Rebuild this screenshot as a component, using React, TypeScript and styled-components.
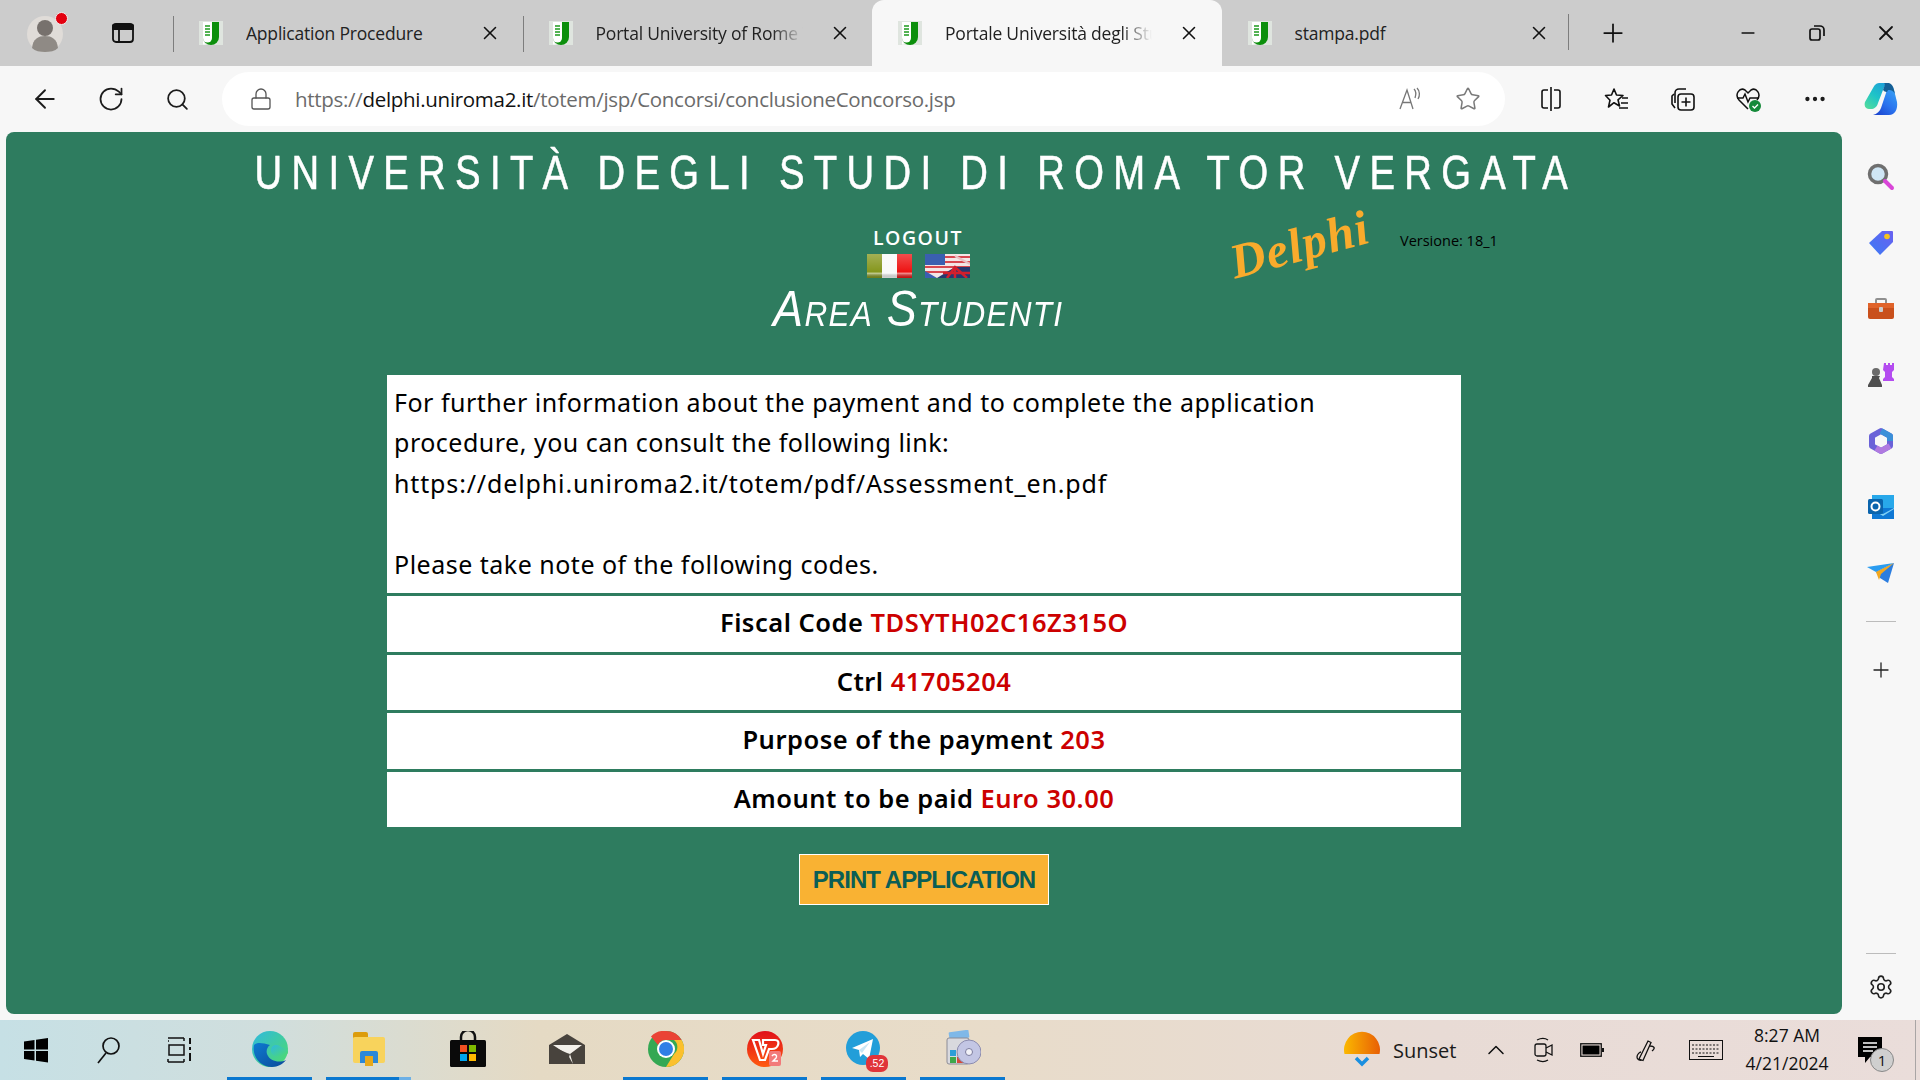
import React from 'react';
import styled, { createGlobalStyle } from 'styled-components';
import { ArrowLeft, ChevronUp, Lock, Minus, MoreHorizontal, Plus, RotateCw, Search, Settings, Star, X } from 'lucide-react';

const Global = createGlobalStyle`
  html, body { margin: 0; padding: 0; width: 1920px; height: 1080px; overflow: hidden; background: #f7f7f7; }
  #root { width: 1920px; height: 1080px; }
  * { box-sizing: border-box; }
`;

const uiFont = `"Open Sans", "Noto Sans", sans-serif`;

const Page = styled.div`
  width: 1920px; height: 1080px; display: flex; flex-direction: column; background: #f7f7f7; font-family: ${uiFont}; color: #1a1a1a; overflow: hidden;
`;

/* ---------- tab strip ---------- */
const TabStrip = styled.div`
  height: 66px; background: #cccccc; display: flex; align-items: stretch; flex: none;
`;
const StripStart = styled.div`
  width: 173px; display: flex; align-items: center; padding-left: 26px; gap: 43px; flex: none;
`;
const Avatar = styled.div`
  position: relative; width: 42px; height: 42px; flex: none; display: flex;
  &::after { content: ''; position: absolute; right: 0; top: 0; width: 11px; height: 11px; border-radius: 50%; background: #e3000f; border: 1px solid #eee; }
`;
const Tab = styled.div<{ $active?: boolean; $divider?: boolean }>`
  width: 349.5px; flex: none; display: flex; align-items: center; padding-left: 25px; position: relative;
  background: ${p => (p.$active ? '#f7f7f7' : 'transparent')};
  border-radius: ${p => (p.$active ? '12px 12px 0 0' : '0')};
  &::before {
    content: ''; display: ${p => (p.$divider ? 'block' : 'none')}; position: absolute; left: 0; top: 16px; bottom: 14px; width: 1px; background: #7d7d7d;
  }
`;
const TabTitle = styled.div<{ $fade?: boolean }>`
  margin-left: 22px; width: 207px; white-space: nowrap; overflow: hidden; font-size: 17.5px; line-height: 24px; color: #222; letter-spacing: -0.2px;
  ${p => (p.$fade ? 'mask-image: linear-gradient(to right, #000 85%, transparent 100%);' : '')}
`;
const TabClose = styled.div`
  margin-left: 25px; width: 24px; height: 24px; display: flex; align-items: center; justify-content: center; color: #111; flex: none;
`;
const StripEnd = styled.div`
  flex: 1; display: flex; align-items: center; position: relative;
`;
const EndDivider = styled.div`
  width: 1px; height: 36px; background: #7d7d7d; margin-left: -3px; margin-top: -2px;
`;
const NewTab = styled.div`
  margin-left: 28px; width: 32px; height: 32px; display: flex; align-items: center; justify-content: center; color: #111;
`;
const WindowButtons = styled.div`
  margin-left: auto; display: flex; width: 207px; height: 100%;
`;
const WindowButton = styled.div`
  width: 69px; display: flex; align-items: center; justify-content: center; color: #111;
`;

/* ---------- toolbar ---------- */
const Toolbar = styled.div`
  height: 66px; display: flex; align-items: center; padding-left: 12px; flex: none; background: #f7f7f7;
`;
const ToolSlot = styled.div`
  width: 66px; height: 54px; display: flex; align-items: center; justify-content: center; color: #1c1c1c; flex: none;
`;
const AddressBar = styled.div`
  width: 1283px; height: 54px; margin: 0 13px 0 12px; background: #fff; border-radius: 27px; display: flex; align-items: center; padding-left: 27px; flex: none;
`;
const Url = styled.div`
  margin-left: 22px; font-size: 20.5px; letter-spacing: -0.3px; color: #6b6b6b; white-space: nowrap;
  b { font-weight: 400; color: #111; }
`;
const AddressTools = styled.div`
  margin-left: auto; display: flex; align-items: center; padding-right: 8px; color: #7a7a7a;
`;
const AddressTool = styled.div`
  width: 58px; display: flex; align-items: center; justify-content: center;
`;

/* ---------- middle ---------- */
const Middle = styled.div`
  flex: 1; display: flex; min-height: 0;
`;
const Panel = styled.main`
  margin-left: 6px; width: 1836px; height: 882px; background: #2e7c5f; border-radius: 8px; display: flex; flex-direction: column; align-items: center; flex: none;
`;
const UniTitle = styled.h1`
  margin: 16px 16px 0 0; height: 48px; flex: none; font-family: "Liberation Sans", sans-serif; font-weight: 400; font-size: 49px; line-height: 48px; letter-spacing: 12px; color: #fff; -webkit-text-stroke: 0.6px #fff; white-space: nowrap; transform: scaleX(0.78);
`;
const HeaderGrid = styled.div`
  width: 100%; display: grid; grid-template-columns: 612px 600px 1fr; height: 179px; flex: none;
`;
const HeaderCenter = styled.div`
  grid-column: 2; display: flex; flex-direction: column; align-items: center;
`;
const Logout = styled.div`
  margin-top: 29px; font-family: "Open Sans", sans-serif; font-size: 19.5px; font-weight: 600; line-height: 26px; letter-spacing: 1.5px; color: #fff;
`;
const Flags = styled.div`
  margin-top: 3px; display: flex; gap: 13px; height: 24px;
`;
const AreaTitle = styled.div`
  margin-top: 6px; font-family: "Liberation Sans", sans-serif; font-style: italic; font-variant: small-caps; font-size: 50px; line-height: 50px; letter-spacing: 1.4px; color: #fff; white-space: nowrap; transform: scaleX(0.9);
`;
const HeaderSide = styled.div`
  grid-column: 3; display: flex; align-items: flex-start; padding: 20px 0 0 10px;
`;
const DelphiMark = styled.div`
  font-family: "Liberation Serif", serif; font-style: italic; font-weight: 700; font-size: 49px; line-height: 50px; color: #f9ab2c; transform: rotate(-15deg); width: 172px; flex: none; text-align: left; letter-spacing: 1px;
`;
const Version = styled.div`
  font-family: "Open Sans", sans-serif; font-size: 14.5px; line-height: 20px; color: #000; margin-top: 15px; white-space: nowrap;
`;

const InfoStack = styled.section`
  width: 1074px; display: flex; flex-direction: column; gap: 3px; flex: none;
`;
const InfoCard = styled.div`
  background: #fff; padding: 7px 7px 9px; font-family: "Noto Sans", sans-serif; font-size: 25px; line-height: 40.4px; letter-spacing: 0.5px; color: #000;
`;
const LinkLine = styled.span`
  letter-spacing: 0.86px;
`;
const CodeRow = styled.div`
  background: #fff; height: 55.5px; line-height: 53px; text-align: center; font-family: "Noto Sans", sans-serif; font-weight: 600; font-size: 25.5px; letter-spacing: 0.5px; color: #000;
  span { color: #cc0000; }
`;
const PrintButton = styled.button`
  margin-top: 27px; width: 250px; height: 51px; flex: none; background: #f9b233; border: 1px solid #fff; font-family: "Liberation Sans", sans-serif; font-weight: 700; font-size: 24px; color: #0b5e56; padding: 0; letter-spacing: -0.95px;
`;

/* ---------- right rail ---------- */
const Rail = styled.aside`
  width: 78px; flex: none; display: flex; flex-direction: column; align-items: center; padding-top: 12px; background: #f7f7f7; height: 888px;
`;
const RailSlot = styled.div`
  height: 66px; width: 100%; display: flex; align-items: center; justify-content: center; flex: none; color: #222;
`;
const RailDivider = styled.div<{ $flush?: boolean }>`
  width: 30px; height: 1px; background: #bcbcbc; flex: none; margin: ${p => (p.$flush ? '0' : '15px 0')};
`;
const RailBottom = styled.div`
  margin-top: auto; display: flex; flex-direction: column; align-items: center; width: 100%;
`;

/* ---------- taskbar ---------- */
const Taskbar = styled.footer`
  height: 60px; flex: none; display: flex; align-items: stretch; margin-top: -6px; position: relative; color: #111;
  background: linear-gradient(90deg, #c6e0e5 0%, #d0dedd 14%, #e5dac4 28%, #e8dcc9 50%, #e8dbd5 75%, #eaddda 100%);
`;
const SysSlot = styled.div`
  width: 72px; flex: none; display: flex; align-items: center; justify-content: center;
`;
const AppGroup = styled.div`
  display: flex; margin-left: 4px;
`;
const AppSlot = styled.div`
  width: 99px; flex: none; display: flex; justify-content: center;
`;
const AppInner = styled.div<{ $open?: boolean; $partial?: boolean }>`
  width: 85px; height: 60px; display: flex; align-items: center; justify-content: center; position: relative;
  border-bottom: 3px solid ${p => (p.$open ? '#0a78d0' : 'transparent')};
  ${p => (p.$partial ? 'border-image: linear-gradient(90deg, #0a78d0 85%, #6cb0e6 85%) 1;' : '')}
`;
const Badge = styled.span`
  position: absolute; left: 45px; top: 35px; height: 17px; min-width: 22px; padding: 0 2px; border-radius: 7px; background: #e0343a; color: #fff; font-family: "Liberation Sans", sans-serif; font-size: 10.5px; line-height: 17px; text-align: center;
`;
const Tray = styled.div`
  margin-left: auto; display: flex; align-items: center; height: 100%; padding-right: 25px;
`;
const Weather = styled.div`
  display: flex; align-items: center; width: 130px; padding-left: 1px; gap: 12px;
`;
const WeatherText = styled.div`
  font-size: 20px; color: #1a1a1a;
`;
const TrayIcon = styled.div<{ $w: number }>`
  width: ${p => p.$w}px; display: flex; align-items: center; justify-content: center; flex: none;
`;
const Clock = styled.div`
  width: 102px; text-align: center; font-size: 17.5px; line-height: 28px; margin-top: -2px; margin-right: 7px; flex: none;
`;
const Notify = styled.div`
  width: 50px; position: relative; display: flex; justify-content: center; flex: none;
`;
const NotifyCount = styled.span`
  position: absolute; left: 25px; top: 12px; width: 24px; height: 24px; border-radius: 50%; background: #cfcfcf; border: 1px solid #888; font-size: 15px; line-height: 22px; text-align: center; color: #111;
`;
const EdgeLine = styled.div`
  position: absolute; right: 4px; top: 0; bottom: 0; width: 1px; background: #a9a5a5;
`;

/* ---------- drawings ---------- */
const Favicon = () => (
  <svg width="26" height="26" viewBox="0 0 26 26" style={{ flex: 'none' }}>
    <rect x="1" y="1" width="24" height="24" fill="#dfe5df" />
    <path d="M5 2h16v15a8 8 0 0 1-16 0z" fill="#0c8f0c" />
    <path d="M5 2h9v16a4.5 4.5 0 0 1-9 0z" fill="#fff" />
    <path d="M7 6h5M7 9h5M7 12h5M7 15h5" stroke="#1d9a1d" strokeWidth="1.5" />
    <path d="M5 20a8 8 0 0 0 3 4.5H5z" fill="#fff" />
  </svg>
);
const AvatarIcon = () => (
  <svg width="42" height="42" viewBox="0 0 42 42">
    <circle cx="19" cy="22" r="18" fill="#e0dcd8" />
    <circle cx="19" cy="16" r="8" fill="#77716d" />
    <path d="M6 36c1-9 6-12 13-12s12 3 13 12c-3 3-8 4-13 4s-10-1-13-4z" fill="#8f8a85" />
  </svg>
);
const TabsIcon = () => (
  <svg width="24" height="24" viewBox="0 0 24 24" fill="none" stroke="#111" strokeWidth="1.8">
    <rect x="2" y="3" width="20" height="18" rx="3" />
    <path d="M2 4.5h20V8H2z" fill="#111" />
    <path d="M8 8v13" />
  </svg>
);
const Restore = () => (
  <svg width="18" height="18" viewBox="0 0 18 18" fill="none" stroke="#111" strokeWidth="1.7">
    <rect x="2" y="5" width="10" height="11" rx="2" />
    <path d="M6 2h6a4 4 0 0 1 4 4v6" />
  </svg>
);
const ReadAloud = () => (
  <svg width="26" height="26" viewBox="0 0 26 26" fill="none" stroke="#777" strokeWidth="1.3">
    <path d="M3 23 10 4l6 19M5.5 16.5h9" />
    <path d="M17 3c2 2 2 6 1 9M20 2c3 3 3 8 1 11" />
  </svg>
);
const SplitIcon = () => (
  <svg width="24" height="26" viewBox="0 0 24 26" fill="none" stroke="#111" strokeWidth="1.6">
    <path d="M9 4H5a2 2 0 0 0-2 2v14a2 2 0 0 0 2 2h4M15 4h4a2 2 0 0 1 2 2v14a2 2 0 0 1-2 2h-4M12 1v24" />
  </svg>
);
const FavsIcon = () => (
  <svg width="26" height="26" viewBox="0 0 26 26" fill="none" stroke="#111" strokeWidth="1.6">
    <path d="M10 3l2.5 6 6.5.5-5 4.3 1.5 6.2-5.5-3.3L4.5 21 6 14.2 1.5 9.5 7.500 9z" strokeLinejoin="round" />
    <path d="M18 12h6M17 17h7M15 22h9" />
  </svg>
);
const CollectIcon = () => (
  <svg width="26" height="26" viewBox="0 0 26 26" fill="none" stroke="#111" strokeWidth="1.6">
    <path d="M5 17V7a4 4 0 0 1 4-4h7" />
    <path d="M4 8 2 10v8l3 4" />
    <rect x="8" y="8" width="16" height="16" rx="3" />
    <path d="M16 11.500v9M11.500 16h9" />
  </svg>
);
const HealthIcon = () => (
  <svg width="28" height="28" viewBox="0 0 28 28" fill="none">
    <path d="M13 24 4 15c-5-6 1-13 6-10l3 3 3-3c5-3 11 4 6 10" stroke="#111" strokeWidth="1.5" />
    <path d="M2 13h6l2-4 3 8 2-4h9" stroke="#111" strokeWidth="1.5" />
    <circle cx="20" cy="21" r="6" fill="#158a3a" />
    <path d="M17.500 21l2 2 3.500-3.500" stroke="#fff" strokeWidth="1.4" />
  </svg>
);
const Copilot = () => (
  <svg width="34" height="34" viewBox="0 0 34 34">
    <defs>
      <linearGradient id="cpA" x1="0.8" y1="0" x2="0.1" y2="1"><stop offset="0" stopColor="#1f9fd8" /><stop offset="0.5" stopColor="#1ec4c8" /><stop offset="1" stopColor="#52dc9c" /></linearGradient>
      <linearGradient id="cpB" x1="0.9" y1="0" x2="0.2" y2="1"><stop offset="0" stopColor="#3aaaf6" /><stop offset="0.6" stopColor="#2a72ee" /><stop offset="1" stopColor="#1c46d0" /></linearGradient>
    </defs>
    <path d="M25 3C28 3 29 5 30 8L33 20C34 27 31 33 25 33H9C13 32 16 29 17 26L22 11C23 7 24 4 25 3Z" fill="url(#cpB)" />
    <path d="M16 1H25C22 2 20 5 19 8L14 21C13 25 10 27 7 27H5C1 27 0 23 1 20L9 6C11 2 13 1 16 1Z" fill="url(#cpA)" />
    <path d="M20 1H25C28 2 29 4 30 8L31 12C29 8 26 8 24 8L23 10C21 10 20 9 19 8C20 5 22 2 20 1Z" fill="#155f96" />
  </svg>
);
const ItalyFlag = () => (
  <svg width="45" height="24" viewBox="0 0 45 24">
    <defs>
      <linearGradient id="gl" x1="0" y1="0" x2="0" y2="1">
        <stop offset="0" stopColor="#fff" stopOpacity=".25" />
        <stop offset=".75" stopColor="#fff" stopOpacity="0" />
        <stop offset=".8" stopColor="#fff" stopOpacity=".55" />
        <stop offset="1" stopColor="#000" stopOpacity=".15" />
      </linearGradient>
    </defs>
    <rect width="15" height="24" fill="#85961c" />
    <rect x="15" width="15" height="24" fill="#fafafa" />
    <rect x="30" width="15" height="24" fill="#ee1212" />
    <rect width="45" height="24" fill="url(#gl)" />
  </svg>
);
const UkFlag = () => (
  <svg width="45" height="24" viewBox="0 0 45 24">
    <rect width="45" height="24" fill="#f3e6e6" />
    <path d="M0 13h45M0 18h45M20 3h25M20 8h25" stroke="#d8474f" strokeWidth="2.200" />
    <rect width="20" height="11" fill="#3a5fb0" />
    <path d="M12 24 30 13h15v11z" fill="#27386f" />
    <path d="M0 24h12L0 17z" fill="#3a5fb0" />
    <path d="M22 24l8-11 12 11M30 13v11M18 19h27" stroke="#d21f2c" strokeWidth="2.500" fill="none" />
    <path d="M30 2l15 8" stroke="#eac0c4" strokeWidth="2" />
  </svg>
);

const MagnifierSide = () => (
  <svg width="28" height="28" viewBox="0 0 28 28">
    <circle cx="11" cy="11" r="8.500" fill="#cfe6f5" stroke="#6f6f6f" strokeWidth="3.500" />
    <path d="M18 18l7 7" stroke="#d946d8" strokeWidth="4" strokeLinecap="round" />
  </svg>
);
const TagSide = () => (
  <svg width="26" height="26" viewBox="0 0 26 26">
    <defs><linearGradient id="tg" x1="0" y1="1" x2="1" y2="0"><stop offset="0" stopColor="#3a7bf5" /><stop offset="1" stopColor="#6a60f0" /></linearGradient></defs>
    <path d="M14 1h10a1 1 0 0 1 1 1v10L12 25 1 13z" fill="url(#tg)" />
    <circle cx="19" cy="6.500" r="2.800" fill="#f6c21c" />
  </svg>
);
const BoxSide = () => (
  <svg width="28" height="24" viewBox="0 0 28 24">
    <path d="M9 6V3a1 1 0 0 1 1-1h8a1 1 0 0 1 1 1v3" fill="none" stroke="#8f8f8f" strokeWidth="2" />
    <rect x="1" y="6" width="26" height="16" rx="2" fill="#c9501c" />
    <rect x="1" y="6" width="26" height="5" fill="#e0632a" />
    <rect x="12" y="10" width="4" height="5" rx="1" fill="#ccc" />
  </svg>
);
const ChessSide = () => (
  <svg width="28" height="28" viewBox="0 0 28 28">
    <path d="M17 2h2v2h2V2h2v2h2V2h2v7l-2 2v5l2 2v2H16v-2l2-2v-5l-2-2z" fill="#b44cf0" />
    <circle cx="9" cy="11" r="4" fill="#6b6b6b" />
    <path d="M5 15h8l-1 2 3 7v2H1v-2l4-7z" fill="#4f4f4f" />
  </svg>
);
const OfficeSide = () => (
  <svg width="26" height="28" viewBox="0 0 26 28" fill="none">
    <path d="M13 4 22 9v10l-9 5-9-5V9z" stroke="#6a62d8" strokeWidth="6" strokeLinejoin="round" />
    <path d="M13 4 22 9v5" stroke="#3b8fd8" strokeWidth="6" strokeLinejoin="round" />
    <path d="M22 19 13 24 8 21" stroke="#b07ae0" strokeWidth="6" strokeLinejoin="round" />
  </svg>
);
const OutlookSide = () => (
  <svg width="26" height="26" viewBox="0 0 26 26">
    <rect x="4" y="1" width="22" height="24" fill="#28a8ea" />
    <path d="M4 14h22v11H4z" fill="#0f78d4" />
    <path d="M4 14l11 6 11-6v1L15 22 4 15z" fill="#7fd0f5" />
    <rect y="5" width="15" height="15" rx="1.500" fill="#0a64ad" />
    <circle cx="7.500" cy="12.500" r="4" fill="none" stroke="#fff" strokeWidth="2" />
  </svg>
);
const PlaneSide = () => (
  <svg width="28" height="22" viewBox="0 0 28 22">
    <path d="M0 5 27 1 9 10z" fill="#2a9cf0" />
    <path d="M27 1 21 21 13 16 9 10z" fill="#2b7de0" />
    <path d="M27 1 9 10l3 8 2-6z" fill="#f3a81f" />
  </svg>
);

const WinLogo = () => (
  <svg width="26" height="26" viewBox="0 0 26 26" fill="#000">
    <path d="M1 4.500 11.500 3v9.500H1zM13 2.800 25 1v11.500H13zM1 14h10.500v9.500L1 22zM13 14h12v11.500L13 23.800z" />
  </svg>
);
const SearchTask = () => (
  <svg width="26" height="28" viewBox="0 0 26 28" fill="none" stroke="#111" strokeWidth="1.7">
    <circle cx="16" cy="10" r="8" />
    <path d="M11 17 3 27" />
  </svg>
);
const TaskView = () => (
  <svg width="26" height="26" viewBox="0 0 26 26" fill="none" stroke="#111" strokeWidth="1.5">
    <path d="M1 1h16M1 4h1M17 1v3M1 25h16M1 22v3M17 22v3" />
    <rect x="2" y="8" width="15" height="10" />
    <path d="M23 1v6M23 10v3M23 16v8" strokeWidth="2" />
  </svg>
);
const EdgeIcon = () => (
  <svg width="36" height="36" viewBox="0 0 36 36">
    <defs>
      <linearGradient id="eg" x1="0" y1="0" x2="1" y2="1"><stop offset="0" stopColor="#2fb9e0" /><stop offset="1" stopColor="#4fdc6a" /></linearGradient>
      <linearGradient id="eb" x1="0" y1="0" x2="1" y2="1"><stop offset="0" stopColor="#0d7ad0" /><stop offset="1" stopColor="#0b4a9a" /></linearGradient>
    </defs>
    <circle cx="18" cy="18" r="18" fill="url(#eg)" />
    <path d="M2 14C0 24 7 36 20 36c6 0 11-3 14-7-6 3-16 2-19-6-1-3 0-7 3-9-7-2-13-3-16 0z" fill="url(#eb)" />
    <path d="M36 21c0 4-8 6-13 4-4-1-5-6-3-9 3-3 7-2 9 0 4 1 7 2 7 5z" fill="url(#eg)" />
  </svg>
);
const FolderIcon = () => (
  <svg width="32" height="34" viewBox="0 0 32 34">
    <rect x="0" y="0" width="15" height="7" rx="2" fill="#dc9c0c" />
    <rect x="0" y="5" width="32" height="26" rx="2" fill="#f8d35c" />
    <path d="M7 31V21a2 2 0 0 1 2-2h14a2 2 0 0 1 2 2v10h-5v-7h-8v7z" fill="#2b88d8" />
    <rect x="12" y="24" width="8" height="10" fill="#e8a91a" />
  </svg>
);
const StoreIcon = () => (
  <svg width="36" height="36" viewBox="0 0 36 36">
    <path d="M11 12V6a7 7 0 0 1 14 0v6" fill="none" stroke="#111" strokeWidth="2.500" />
    <rect x="0" y="9" width="36" height="27" rx="1.500" fill="#0a0a0a" />
    <rect x="10" y="14" width="7" height="7" fill="#f25022" />
    <rect x="19" y="14" width="7" height="7" fill="#7fba00" />
    <rect x="10" y="23" width="7" height="7" fill="#00a4ef" />
    <rect x="19" y="23" width="7" height="7" fill="#ffb900" />
  </svg>
);
const MailIcon = () => (
  <svg width="36" height="30" viewBox="0 0 36 30">
    <path d="M0 11 18 0l18 11v19H0z" fill="#48433d" />
    <path d="M4 11h29L21 20l3 10-5-9z" fill="#f3f0ea" />
    <path d="M0 11l18 8 3 1-3 10H0z" fill="#48433d" />
  </svg>
);
const ChromeIcon = () => (
  <svg width="36" height="36" viewBox="0 0 36 36">
    <circle cx="18" cy="18" r="18" fill="#34a853" />
    <path d="M18 0a18 18 0 0 1 15.600 9H18a9 9 0 0 0-8 5L3 5.500A18 18 0 0 1 18 0z" fill="#ea4335" />
    <path d="M33.600 9A18 18 0 0 1 18 36l8-13a9 9 0 0 0 0-14z" fill="#fbc02d" />
    <circle cx="18" cy="18" r="9" fill="#fff" />
    <circle cx="18" cy="18" r="7" fill="#2f7fe6" />
  </svg>
);
const WpsIcon = () => (
  <svg width="36" height="36" viewBox="0 0 36 36">
    <defs><linearGradient id="wp" x1="0" y1="0" x2="0" y2="1"><stop offset="0" stopColor="#e0101a" /><stop offset="1" stopColor="#ff5a10" /></linearGradient></defs>
    <circle cx="18" cy="18" r="18" fill="url(#wp)" />
    <path d="M6 9h6l4 14 3-9h-3V9h12c3 0 4 2 3 5s-3 4-6 4h-3l-4 11h-5z" fill="none" stroke="#fff" strokeWidth="2.200" />
    <rect x="22" y="20" width="12" height="15" rx="2" fill="#f27a7a" />
    <path d="M25 25c2-3 6-1 4 2l-3 3h5" fill="none" stroke="#fff" strokeWidth="1.400" />
  </svg>
);
const TelegramIcon = () => (
  <svg width="36" height="36" viewBox="0 0 36 36">
    <circle cx="17" cy="17" r="17" fill="#229ed9" />
    <path d="M6 17 27 8l-4 20-6-5-3 3-1-7z" fill="#fff" />
    <path d="M13 19l11-8-8 11z" fill="#c8e6f5" />
  </svg>
);
const DiscIcon = () => (
  <svg width="36" height="38" viewBox="0 0 36 38">
    <rect x="4" y="1" width="20" height="8" rx="1" fill="#7fb8e8" transform="rotate(-8 14 5)" />
    <rect x="2" y="8" width="22" height="26" rx="2" fill="#d9d9de" stroke="#8c8c96" />
    <path d="M5 20h6v6H5z" fill="#2c9ed8" /><path d="M12 20h6v6h-6z" fill="#f0b428" /><path d="M5 27h6v6H5z" fill="#3fa84a" /><path d="M12 27h6v6h-6z" fill="#d84a3a" />
    <circle cx="24" cy="22" r="12" fill="#c3c6e4" stroke="#8c8cae" />
    <circle cx="24" cy="22" r="3.500" fill="#f2f2f8" stroke="#7c7c9e" />
  </svg>
);
const SunIcon = () => (
  <svg width="38" height="40" viewBox="0 0 38 40">
    <defs><linearGradient id="sn" x1="0" y1="0" x2="1" y2="0"><stop offset="0" stopColor="#fbb800" /><stop offset="1" stopColor="#e85f05" /></linearGradient></defs>
    <path d="M1.500 24A18 18 0 1 1 36.500 24z" fill="url(#sn)" />
    <path d="M13 28l6 6 6-6" fill="none" stroke="#1a8fe0" strokeWidth="3.500" />
  </svg>
);
const MeetIcon = () => (
  <svg width="20" height="26" viewBox="0 0 20 26" fill="none" stroke="#111" strokeWidth="1.300">
    <rect x="1" y="7" width="11" height="12" rx="2" />
    <path d="M12 11l6-3v10l-6-3M3 3c4-2 8-2 11 0M3 23c4 2 8 2 11 0" />
  </svg>
);
const BatteryIcon = () => (
  <svg width="24" height="14" viewBox="0 0 24 14">
    <rect x="0.750" y="0.750" width="20.500" height="12.500" fill="none" stroke="#111" strokeWidth="1.300" />
    <rect x="2.500" y="2.500" width="17" height="9" fill="#000" />
    <rect x="22" y="5" width="2" height="4" fill="#111" />
  </svg>
);
const PenIcon = () => (
  <svg width="22" height="24" viewBox="0 0 22 24" fill="none" stroke="#111" strokeWidth="1.300">
    <path d="M4 21 13 3l3 1.500-8 18zM8 22c-3 1-6 0-6-3s3-5 4-5M15 8c4 0 6 2 2 5" />
  </svg>
);
const KeyboardIcon = () => (
  <svg width="34" height="20" viewBox="0 0 34 20" fill="none" stroke="#111">
    <rect x="0.500" y="0.500" width="33" height="19" />
    <path d="M3 5h28M3 9h28M3 13h28" strokeDasharray="2 1.500" />
    <path d="M9 16.500h16" />
  </svg>
);
const BubbleIcon = () => (
  <svg width="26" height="28" viewBox="0 0 26 28">
    <path d="M1 1h24v20H13l-5 6v-6H1z" fill="#000" />
    <path d="M6 7h14M6 11h14M6 15h10" stroke="#fff" strokeWidth="1.300" />
  </svg>
);

const tabs = [
  { title: 'Application Procedure', divider: true },
  { title: 'Portal University of Rome Tor Vergata', divider: true, fade: true },
  { title: 'Portale Università degli Studi di Roma', active: true, fade: true },
  { title: 'stampa.pdf' },
];

const rows = [
  ['Fiscal Code', 'TDSYTH02C16Z315O'],
  ['Ctrl', '41705204'],
  ['Purpose of the payment', '203'],
  ['Amount to be paid', 'Euro 30.00'],
];

const railIcons = [MagnifierSide, TagSide, BoxSide, ChessSide, OfficeSide, OutlookSide, PlaneSide];

const apps: { Icon: React.FC; open?: boolean; partial?: boolean; badge?: string }[] = [
  { Icon: EdgeIcon, open: true },
  { Icon: FolderIcon, open: true, partial: true },
  { Icon: StoreIcon },
  { Icon: MailIcon },
  { Icon: ChromeIcon, open: true },
  { Icon: WpsIcon, open: true },
  { Icon: TelegramIcon, open: true, badge: '.52' },
  { Icon: DiscIcon, open: true },
];

export default function App() {
  return (
    <Page>
      <Global />
      <TabStrip>
        <StripStart>
          <Avatar><AvatarIcon /></Avatar>
          <TabsIcon />
        </StripStart>
        {tabs.map(t => (
          <Tab key={t.title} $active={t.active} $divider={t.divider}>
            <Favicon />
            <TabTitle $fade={t.fade}>{t.title}</TabTitle>
            <TabClose><X size={22} strokeWidth={1.7} /></TabClose>
          </Tab>
        ))}
        <StripEnd>
          <EndDivider />
          <NewTab><Plus size={30} strokeWidth={1.4} /></NewTab>
          <WindowButtons>
            <WindowButton><Minus size={20} strokeWidth={2} /></WindowButton>
            <WindowButton><Restore /></WindowButton>
            <WindowButton><X size={24} strokeWidth={1.8} /></WindowButton>
          </WindowButtons>
        </StripEnd>
      </TabStrip>

      <Toolbar>
        <ToolSlot><ArrowLeft size={30} strokeWidth={1.5} /></ToolSlot>
        <ToolSlot><RotateCw size={28} strokeWidth={1.5} /></ToolSlot>
        <ToolSlot><Search size={25} strokeWidth={1.7} /></ToolSlot>
        <AddressBar>
          <Lock size={24} strokeWidth={1.3} color="#555" />
          <Url>https://<b>delphi.uniroma2.it</b>/totem/jsp/Concorsi/conclusioneConcorso.jsp</Url>
          <AddressTools>
            <AddressTool><ReadAloud /></AddressTool>
            <AddressTool><Star size={26} strokeWidth={1.4} /></AddressTool>
          </AddressTools>
        </AddressBar>
        <ToolSlot><SplitIcon /></ToolSlot>
        <ToolSlot><FavsIcon /></ToolSlot>
        <ToolSlot><CollectIcon /></ToolSlot>
        <ToolSlot><HealthIcon /></ToolSlot>
        <ToolSlot><MoreHorizontal size={26} strokeWidth={2} /></ToolSlot>
        <ToolSlot><Copilot /></ToolSlot>
      </Toolbar>

      <Middle>
        <Panel>
          <UniTitle>UNIVERSITÀ DEGLI STUDI DI ROMA TOR VERGATA</UniTitle>
          <HeaderGrid>
            <HeaderCenter>
              <Logout>LOGOUT</Logout>
              <Flags><ItalyFlag /><UkFlag /></Flags>
              <AreaTitle>Area Studenti</AreaTitle>
            </HeaderCenter>
            <HeaderSide>
              <DelphiMark>Delphi</DelphiMark>
              <Version>Versione: 18_1</Version>
            </HeaderSide>
          </HeaderGrid>
          <InfoStack>
            <InfoCard>
              For further information about the payment and to complete the application procedure, you can consult the following link:<br />
              <LinkLine>https://delphi.uniroma2.it/totem/pdf/Assessment_en.pdf</LinkLine><br />
              <br />
              Please take note of the following codes.
            </InfoCard>
            {rows.map(([label, value]) => (
              <CodeRow key={label}>{label} <span>{value}</span></CodeRow>
            ))}
          </InfoStack>
          <PrintButton>PRINT APPLICATION</PrintButton>
        </Panel>
        <Rail>
          {railIcons.map((Icon, i) => <RailSlot key={i}><Icon /></RailSlot>)}
          <RailDivider />
          <RailSlot><Plus size={24} strokeWidth={1.3} /></RailSlot>
          <RailBottom>
            <RailDivider $flush />
            <RailSlot><Settings size={26} strokeWidth={1.5} /></RailSlot>
          </RailBottom>
        </Rail>
      </Middle>

      <Taskbar>
        <SysSlot><WinLogo /></SysSlot>
        <SysSlot><SearchTask /></SysSlot>
        <SysSlot><TaskView /></SysSlot>
        <AppGroup>
          {apps.map(({ Icon, open, partial, badge }, i) => (
            <AppSlot key={i}>
              <AppInner $open={open} $partial={partial}>
                <Icon />
                {badge && <Badge>{badge}</Badge>}
              </AppInner>
            </AppSlot>
          ))}
        </AppGroup>
        <Tray>
          <Weather>
            <SunIcon />
            <WeatherText>Sunset</WeatherText>
          </Weather>
          <TrayIcon $w={48}><ChevronUp size={28} strokeWidth={1.3} /></TrayIcon>
          <TrayIcon $w={48}><MeetIcon /></TrayIcon>
          <TrayIcon $w={48}><BatteryIcon /></TrayIcon>
          <TrayIcon $w={60}><PenIcon /></TrayIcon>
          <TrayIcon $w={60}><KeyboardIcon /></TrayIcon>
          <Clock>8:27 AM<br />4/21/2024</Clock>
          <Notify><BubbleIcon /><NotifyCount>1</NotifyCount></Notify>
        </Tray>
        <EdgeLine />
      </Taskbar>
    </Page>
  );
}
